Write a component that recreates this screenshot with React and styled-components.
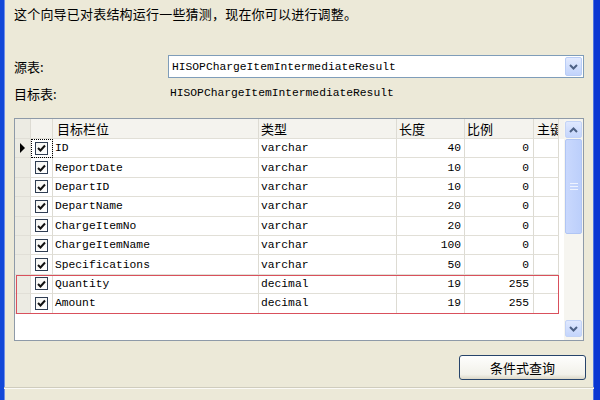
import React from 'react'
import styled, { createGlobalStyle } from 'styled-components'

const GlobalStyle = createGlobalStyle`
    body {
        margin: 0;
        background: #ece9d8;
        font-family: "Noto Sans CJK SC", "Liberation Sans", sans-serif;
    }
`

const cjk = `"Noto Sans CJK SC", "Liberation Sans", sans-serif`
const mono = `"Liberation Mono", "Noto Sans CJK SC", monospace`

const Window = styled.div`
    width: 600px;
    height: 400px;
    box-sizing: border-box;
    display: flex;
    flex-direction: column;
    background: #ece9d8;
    border-left: 4px solid #1247d8;
    border-right: 6px solid #0a36d2;
    box-shadow: inset 1px 0 0 #6d8ee8, inset -1px 0 0 #4f74e0;
    overflow: hidden;
`
const Body = styled.div`
    display: flex;
    flex-direction: column;
    padding: 6px 10px 0 10px;
`
const Intro = styled.div`
    font-family: ${cjk};
    font-size: 13px;
    line-height: 16px;
    color: #000;
    letter-spacing: 0.2px;
`
const FieldRow = styled.div`
    display: flex;
    align-items: center;
    height: ${p => p.$h}px;
    margin-top: ${p => p.$mt}px;
`
const Label = styled.div`
    width: 154px;
    font-family: ${cjk};
    font-size: 13px;
    color: #000;
`
const Combo = styled.div`
    flex: 1;
    height: 23px;
    box-sizing: border-box;
    border: 1px solid #7f9db9;
    background: #fff;
    display: flex;
    align-items: center;
    padding: 0 1px 0 3px;
`
const ComboText = styled.div`
    flex: 1;
    font-family: ${mono};
    font-size: 11.3px;
    color: #000;
`
const ValueText = styled.div`
    font-family: ${mono};
    font-size: 11.3px;
    color: #000;
    padding-left: 2px;
`
const DropButton = styled.div`
    width: 17px;
    height: 19px;
    box-sizing: border-box;
    border: 1px solid #b9cdf6;
    border-radius: 2px;
    background: linear-gradient(#e2eafe, #c1d3fb);
    display: flex;
    align-items: center;
    justify-content: center;
`
const Grid = styled.div`
    margin-top: 17px;
    height: 223px;
    box-sizing: border-box;
    border: 1px solid #8e9aa8;
    background: #fff;
    display: flex;
`
const Table = styled.div`
    flex: 1;
    display: flex;
    flex-direction: column;
`
const Row = styled.div`
    display: grid;
    grid-template-columns: 16px 22px 206px 138px 68px 69px 25px;
    height: ${p => (p.$header ? 20 : 19.4)}px;
    box-sizing: border-box;
    background: ${p => (p.$header ? '#f4f3ee' : '#fff')};
`
const Cell = styled.div`
    box-sizing: border-box;
    border-right: 1px solid #dddbd3;
    border-bottom: 1px solid #e1dfd7;
    display: flex;
    align-items: center;
    justify-content: ${p => (p.$right ? 'flex-end' : p.$center ? 'center' : 'flex-start')};
    padding: ${p => (p.$right ? '0 3px 0 0' : p.$center ? '0' : '0 0 0 2px')};
    font-family: ${p => (p.$cjk ? cjk : mono)};
    font-size: ${p => (p.$cjk ? '13px' : '11.3px')};
    color: #000;
    white-space: nowrap;
    overflow: hidden;
    background: ${p => (p.$rowHead ? '#ecebe3' : 'transparent')};
    outline: ${p => (p.$focus ? '1px dotted #000' : 'none')};
    outline-offset: -1px;
`
const Highlight = styled.div`
    position: relative;
    &::after {
        content: '';
        position: absolute;
        inset: 0 5px 0 1px;
        border: 1px solid #d9505c;
        pointer-events: none;
    }
`
const Check = styled.div`
    width: 13px;
    height: 13px;
    box-sizing: border-box;
    border: 1px solid #2f3d52;
    background: linear-gradient(135deg, #f4f4f0, #fff);
    display: flex;
    align-items: center;
    justify-content: center;
`
const Scrollbar = styled.div`
    width: 19px;
    box-sizing: border-box;
    padding: 2px 1px 3px 1px;
    background: #f6f5f0;
    display: flex;
    flex-direction: column;
`
const ScrollButton = styled.div`
    height: 17px;
    box-sizing: border-box;
    border: 1px solid #c3d3f6;
    border-radius: 2px;
    background: linear-gradient(#dfe8fe, #c4d5fc);
    display: flex;
    align-items: center;
    justify-content: center;
`
const Thumb = styled.div`
    height: 95px;
    margin-top: 1px;
    box-sizing: border-box;
    border: 1px solid #b0c5f4;
    border-radius: 2px;
    background: linear-gradient(90deg, #c9d8fd, #bccffb);
    display: flex;
    align-items: center;
    justify-content: center;
`
const Track = styled.div`
    flex: 1;
`
const Footer = styled.div`
    display: flex;
    justify-content: flex-end;
    margin-top: 14px;
    margin-right: -2px;
`
const Button = styled.button`
    width: 127px;
    height: 25px;
    border: 1px solid #27446b;
    border-radius: 3px;
    background: linear-gradient(#fefefd, #f2f1ea 80%, #dcd8c8);
    font-family: ${cjk};
    font-size: 13px;
    color: #000;
    padding: 0;
`
const Separator = styled.div`
    margin-top: 7px;
    border-top: 1px solid #cfccbd;
    border-bottom: 1px solid #fbfaf6;
`

const Chevron = ({ up }) => (
    <svg width="9" height="6" viewBox="0 0 9 6">
        <polyline
            points={up ? '1,5 4.5,1.5 8,5' : '1,1 4.5,4.5 8,1'}
            fill="none"
            stroke="#4d6185"
            strokeWidth="2"
        />
    </svg>
)

const Tick = () => (
    <svg width="9" height="8" viewBox="0 0 9 8">
        <polyline points="1,4 3.5,6.5 8,1.5" fill="none" stroke="#111" strokeWidth="2" />
    </svg>
)

const Grip = () => (
    <svg width="8" height="7" viewBox="0 0 8 7">
        <path d="M0 0.5h8M0 3.5h8M0 6.5h8" stroke="#eef3fe" strokeWidth="1" />
    </svg>
)

const Arrow = () => (
    <svg width="7" height="10" viewBox="0 0 7 10">
        <polygon points="1,0 6,5 1,10" fill="#000" />
    </svg>
)

const fields = [
    ['ID', 'varchar', 40, 0],
    ['ReportDate', 'varchar', 10, 0],
    ['DepartID', 'varchar', 10, 0],
    ['DepartName', 'varchar', 20, 0],
    ['ChargeItemNo', 'varchar', 20, 0],
    ['ChargeItemName', 'varchar', 100, 0],
    ['Specifications', 'varchar', 50, 0],
]
const marked = [
    ['Quantity', 'decimal', 19, 255],
    ['Amount', 'decimal', 19, 255],
]

const FieldLine = ({ f, current }) => (
    <Row>
        <Cell $rowHead $center>{current && <Arrow />}</Cell>
        <Cell $center $focus={current}><Check><Tick /></Check></Cell>
        <Cell>{f[0]}</Cell>
        <Cell>{f[1]}</Cell>
        <Cell $right>{f[2]}</Cell>
        <Cell $right style={{ paddingRight: 4 }}>{f[3]}</Cell>
        <Cell />
    </Row>
)

export default function App() {
    return (
        <Window>
            <GlobalStyle />
            <Body>
                <Intro>这个向导已对表结构运行一些猜测，现在你可以进行调整。</Intro>
                <FieldRow $h={23} $mt={33}>
                    <Label>源表:</Label>
                    <Combo>
                        <ComboText>HISOPChargeItemIntermediateResult</ComboText>
                        <DropButton><Chevron /></DropButton>
                    </Combo>
                </FieldRow>
                <FieldRow $h={16} $mt={7}>
                    <Label>目标表:</Label>
                    <ValueText>HISOPChargeItemIntermediateResult</ValueText>
                </FieldRow>
                <Grid>
                    <Table>
                        <Row $header>
                            <Cell $rowHead />
                            <Cell />
                            <Cell $cjk style={{ paddingLeft: 4 }}>目标栏位</Cell>
                            <Cell $cjk>类型</Cell>
                            <Cell $cjk>长度</Cell>
                            <Cell $cjk>比例</Cell>
                            <Cell $cjk style={{ paddingLeft: 3 }}>主键</Cell>
                        </Row>
                        {fields.map((f, i) => (
                            <FieldLine key={f[0]} f={f} current={i === 0} />
                        ))}
                        <Highlight>
                            {marked.map(f => (
                                <FieldLine key={f[0]} f={f} />
                            ))}
                        </Highlight>
                    </Table>
                    <Scrollbar>
                        <ScrollButton><Chevron up /></ScrollButton>
                        <Thumb><Grip /></Thumb>
                        <Track />
                        <ScrollButton><Chevron /></ScrollButton>
                    </Scrollbar>
                </Grid>
                <Footer>
                    <Button>条件式查询</Button>
                </Footer>
            </Body>
            <Separator />
        </Window>
    )
}
